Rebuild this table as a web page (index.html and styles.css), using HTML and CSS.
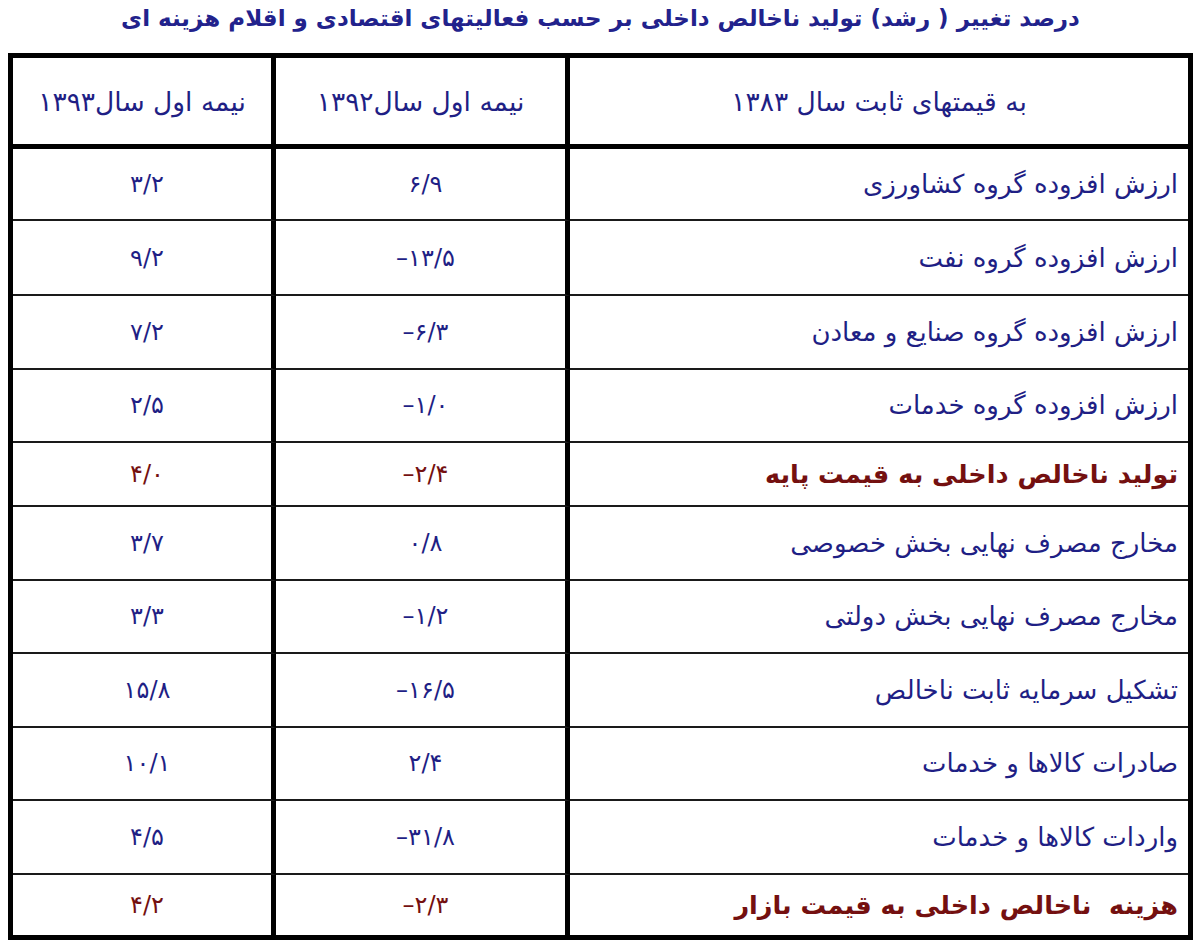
FILE: index.html
```html
<!DOCTYPE html>
<html lang="fa" dir="rtl">
<head>
<meta charset="utf-8">
<title>درصد تغییر تولید ناخالص داخلی</title>
<link rel="stylesheet" href="styles.css">
</head>
<body>
<h1 class="title">درصد تغییر ( رشد) تولید ناخالص داخلی بر حسب فعالیتهای اقتصادی و اقلام هزینه ای</h1>
<table class="gdp">
  <thead>
    <tr>
      <th class="label-col">به قیمتهای ثابت سال ۱۳۸۳</th>
      <th class="num-col">نیمه اول سال۱۳۹۲</th>
      <th class="num-col">نیمه اول سال۱۳۹۳</th>
    </tr>
  </thead>
  <tbody>
    <tr class="r1"><td class="label">ارزش افزوده گروه کشاورزی</td><td class="num">۶/۹</td><td class="num">۳/۲</td></tr>
    <tr class="r2"><td class="label">ارزش افزوده گروه نفت</td><td class="num">–۱۳/۵</td><td class="num">۹/۲</td></tr>
    <tr class="r3"><td class="label">ارزش افزوده گروه صنایع و معادن</td><td class="num">–۶/۳</td><td class="num">۷/۲</td></tr>
    <tr class="r3"><td class="label">ارزش افزوده گروه خدمات</td><td class="num">–۱/۰</td><td class="num">۲/۵</td></tr>
    <tr class="total"><td class="label">تولید ناخالص داخلی به قیمت پایه</td><td class="num">–۲/۴</td><td class="num">۴/۰</td></tr>
    <tr class="r4"><td class="label">مخارج مصرف نهایی بخش خصوصی</td><td class="num">۰/۸</td><td class="num">۳/۷</td></tr>
    <tr class="r5"><td class="label">مخارج مصرف نهایی بخش دولتی</td><td class="num">–۱/۲</td><td class="num">۳/۳</td></tr>
    <tr class="r4"><td class="label">تشکیل سرمایه ثابت ناخالص</td><td class="num">–۱۶/۵</td><td class="num">۱۵/۸</td></tr>
    <tr class="r4"><td class="label">صادرات کالاها و خدمات</td><td class="num">۲/۴</td><td class="num">۱۰/۱</td></tr>
    <tr class="r4"><td class="label">واردات کالاها و خدمات</td><td class="num">–۳۱/۸</td><td class="num">۴/۵</td></tr>
    <tr class="total last"><td class="label">هزینه&nbsp; ناخالص داخلی به قیمت بازار</td><td class="num">–۲/۳</td><td class="num">۴/۲</td></tr>
  </tbody>
</table>
</body>
</html>
```
FILE: styles.css
```css
html, body {
  margin: 0;
  padding: 0;
  background: #ffffff;
}
body {
  padding: 0 7px 0 8px;
  font-family: "DejaVu Sans", sans-serif;
  color: #1f1f85;
}
.title {
  margin: 0;
  height: 53px;
  line-height: 36px;
  font-size: 23px;
  font-weight: bold;
  text-align: center;
  color: #22228c;
}
.gdp {
  width: 1185px;
  border: 5px solid #000;
  border-spacing: 0;
  border-collapse: separate;
  table-layout: fixed;
}
.gdp th, .gdp td {
  padding: 0;
  border-bottom: 2px solid #1a1a1a;
}
.gdp th {
  height: 86px;
  border-bottom: 5px solid #000;
  font-size: 26.5px;
  font-weight: normal;
  color: #1f1f85;
  text-align: center;
}
.gdp .label-col { width: 618px; }
.gdp .num-col { border-right: 5px solid #000; }
.gdp th.num-col:nth-child(2) { width: 289px; }
.gdp th.num-col:nth-child(3) { width: 258px; }
.gdp td.num {
  border-right: 5px solid #000;
  text-align: center;
  direction: ltr;
  font-size: 24px;
  letter-spacing: 1px;
}
.gdp td.label {
  text-align: right;
  padding-right: 10px;
  font-size: 26px;
}
.gdp tr td { height: 71.5px; }
.gdp tr.r1 td { height: 70px; }
.gdp tr.r2 td { height: 73px; }
.gdp tr.total td {
  height: 62px;
  color: #741010;
}
.gdp tr.total td.label {
  font-weight: bold;
  font-size: 25.5px;
}
.gdp tr.last td {
  height: 60px;
  border-bottom: 0;
}
```
